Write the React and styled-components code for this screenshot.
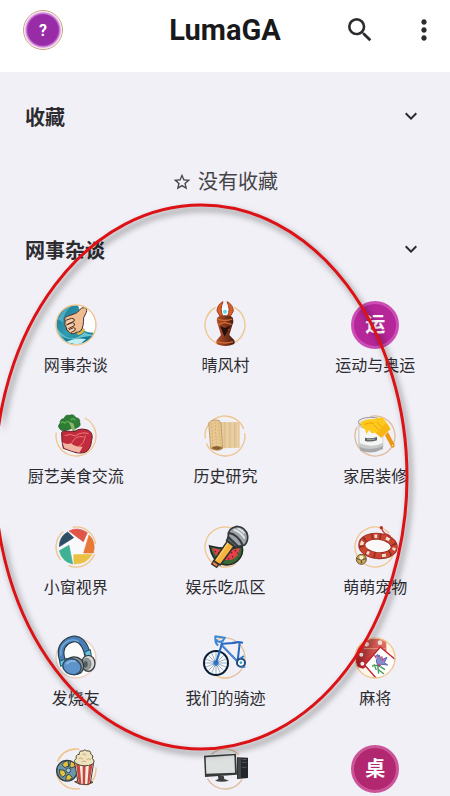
import { useState } from 'react';
import styled, { createGlobalStyle } from 'styled-components';
import { MdExpandMore, MdMoreVert, MdSearch, MdStarBorder } from 'react-icons/md';

const GlobalStyle = createGlobalStyle`
  :root {
    --color-bg: #f1f0f6;
    --color-surface: #fff;
    --color-text: #2c2c30;
    --color-ring: #efc58d;
    --color-mark: #dc1216;
  }

  * {
    box-sizing: border-box;
  }

  body {
    margin: 0;
    color: var(--color-text);
    background: var(--color-bg);
    font-family: Roboto, 'Noto Sans CJK SC', sans-serif;
  }

  button {
    padding: 0;
    border: none;
    background: none;
    color: inherit;
    font-family: inherit;
    cursor: pointer;
  }
`;

const Screen = styled.div`
  position: relative;
  display: flex;
  flex-direction: column;
  height: 100vh;
  overflow: hidden;
`;

const Header = styled.header`
  display: grid;
  grid-template-columns: 1fr auto 1fr;
  align-items: center;
  flex-shrink: 0;
  padding: 10px 10px 22px;
  background: var(--color-surface);
`;

const Avatar = styled.button`
  width: 40px;
  height: 40px;
  margin-left: 13px;
  border: 1px solid #c9a283;
  border-radius: 50%;
  background: radial-gradient(circle, #982ba6 15px, #b653c3 16px, #efd3f2 18px, #fff 19px);
  color: #fff;
  font-size: 16px;
  font-weight: 700;
`;

const Title = styled.h1`
  margin: 0;
  color: #19191b;
  font-size: 29px;
  line-height: 40px;
`;

const Actions = styled.div`
  display: flex;
  justify-content: flex-end;
  gap: 32px;
`;

const IconButton = styled.button`
  display: flex;
  font-size: 32px;
`;

const Main = styled.main`
  flex: 1;
  min-height: 0;
  padding-top: 21px;
  overflow-y: auto;
  scrollbar-width: none;
`;

const SectionTitle = styled.h2`
  margin: 0;
`;

const SectionToggle = styled.button`
  display: flex;
  align-items: center;
  justify-content: space-between;
  width: 100%;
  height: 46px;
  padding: 0 27px 0 25px;
  font-size: 20px;
  font-weight: 700;

  & svg {
    width: 24px;
    height: 24px;
    transform: ${({ $open }) => ($open ? 'none' : 'rotate(-90deg)')};
  }
`;

const Empty = styled.p`
  display: flex;
  align-items: center;
  justify-content: center;
  gap: 6px;
  margin: 0;
  padding: 31px 0 32px;
  color: #444448;
  font-size: 20px;
  line-height: 24px;
`;

const BoardGrid = styled.ul`
  display: grid;
  grid-template-columns: repeat(3, 1fr);
  row-gap: 34px;
  margin: 0;
  padding: 29px 0 29px 1px;
  list-style: none;
`;

const BoardLink = styled.a`
  display: flex;
  flex-direction: column;
  align-items: center;
  gap: 5px;
  color: inherit;
  font-size: 16px;
  line-height: 24px;
  text-decoration: none;
  white-space: nowrap;
`;

const BoardIcon = styled.svg`
  width: 48px;
  height: 48px;
  overflow: visible;
`;

const LetterIcon = styled.span`
  display: grid;
  place-items: center;
  width: 48px;
  height: 48px;
  border: 3px solid ${({ $border }) => $border};
  border-radius: 50%;
  background: ${({ $color }) => $color};
  color: #fff;
  font-size: 20px;
  font-weight: 700;
`;

const Mark = styled.svg`
  position: absolute;
  inset: 0;
  width: 100%;
  height: 100%;
  pointer-events: none;
  filter: drop-shadow(3px 4px 3px rgba(0, 0, 0, 0.5));
`;

const Ring = ({ dash, rotate = 0, color = 'var(--color-ring)' }) => (
  <circle
    cx="72"
    cy="72"
    r="60"
    fill="none"
    stroke={color}
    strokeWidth="4"
    pathLength="100"
    strokeDasharray={dash}
    transform={`rotate(${rotate} 72 72)`}
  />
);

const Thumb = () => (
  <BoardIcon viewBox="0 0 144 144">
    <defs>
      <clipPath id="thumb-clip">
        <circle cx="72" cy="71" r="59" />
      </clipPath>
      <linearGradient id="thumb-sea" x1="0" y1="0" x2="1" y2="1">
        <stop offset="0" stopColor="#176b88" />
        <stop offset="0.5" stopColor="#2f9db3" />
        <stop offset="1" stopColor="#0e6880" />
      </linearGradient>
    </defs>
    <g clipPath="url(#thumb-clip)">
      <rect width="144" height="144" fill="url(#thumb-sea)" />
      <path d="M76 8q26-2 44 18l20 40-2 28q-30 4-46-8l-2-40z" fill="#fff" />
      <path d="M10 72q18 34 42 40 26 2 46-18 12 8 34 8-20 12-42 10-30 20-62 2-14-16-18-42z" fill="#6cc3d0" />
      <path d="M14 90q24 30 54 24 24-8 54-10-24 30-70 28z" fill="#127b98" />
      <path d="M18 54q14-30 40-38-28 24-24 50z" fill="#4dacc0" />
      <path d="M40 124q30-16 62-10l-20 18z" fill="#c4edef" />
    </g>
    <path d="M40 60q-6-10 6-14l22-8q8-2 14-10 6-10 15-8 10 2 6 14l-8 16q0 12-2 24-4 20-20 20-14 10-22-2-10-4-8-12-8-10-3-20z" fill="#f0bd93" stroke="#4b3028" strokeWidth="3" />
    <path d="M41 58l18-6q10 0 8 8l-21 10M43 72l18-7q9 1 6 9l-18 9M51 86l14-6q8 1 4 8l-13 7" fill="#f6cfaa" stroke="#4b3028" strokeWidth="3" />
    <path d="M73 96q16-2 21-16l5 7q-8 14-20 15z" fill="#e8b53a" />
    <Ring />
  </BoardIcon>
);

const Totem = () => (
  <BoardIcon viewBox="0 0 144 144">
    <defs>
      <linearGradient id="totem-wood">
        <stop offset="0" stopColor="#b9532a" />
        <stop offset="0.4" stopColor="#8a3b20" />
        <stop offset="1" stopColor="#45190f" />
      </linearGradient>
    </defs>
    <Ring dash="84 16" rotate="-62" />
    <path d="M58 22l14-6 14 6-4 28H62z" fill="#f3ffff" />
    <circle cx="72" cy="32" r="6" fill="#65d8e4" />
    <path d="M66 2Q49 10 48 30l9 16h9Q55 26 66 2zM78 2q18 8 19 28l-9 16h-9Q90 26 78 2z" fill="#d95f28" stroke="#a5401f" strokeWidth="3" />
    <path d="M48 52q4-9 24-9t24 9q3 10-2 20l-9 30 15 16q3 8-2 12-24 10-50 0-5-5-1-12l13-16-9-30q-6-11-3-20z" fill="url(#totem-wood)" />
    <path d="M50 54q21 9 44 0M52 70l18-6 22 6M60 84l12 6 13-6M48 122q24 8 48 0" fill="none" stroke="#d46b31" strokeWidth="4" />
    <path d="M57 75l14 32 16-32-16 6z" fill="#270f0b" />
  </BoardIcon>
);

const Meat = () => (
  <BoardIcon viewBox="0 0 144 144">
    <Ring dash="70 30" rotate="-64" />
    <path d="M40 56q-14 2-18-7-6-8 2-15 0-14 12-14 3-13 17-10 13-5 18 7 14 1 12 14 5 11-6 15-7 7-14 2z" fill="#2d7d35" stroke="#1e5729" strokeWidth="2" />
    <path d="M49 28q10 20 14 33l12-1q-8-8-10-25" fill="#8fb66d" />
    <path d="M27 34q5-8 12 0 5-11 13-2M56 24q7-8 14 1" fill="none" stroke="#5aaa51" strokeWidth="4" />
    <path d="M29 66q-2-9 10-9 18 2 30 1 17-12 40-3 16 8 10 30-1 20-12 31-12 10-35 6L34 109Q29 92 29 66z" fill="#c12b3c" stroke="#66202b" strokeWidth="3" />
    <path d="M31 91q15 9 26 2 12 13 35 11l-10 18q-22-3-45-14z" fill="#f0b5a3" />
    <path d="M38 71q18-8 32 1 18-14 40-7M60 92q10-23 35-17M100 70q-2 24-22 35" fill="none" stroke="#f07a7b" strokeWidth="3" />
  </BoardIcon>
);

const Scroll = () => (
  <BoardIcon viewBox="0 0 144 144">
    <Ring dash="46 4 46 4" rotate="-8" />
    <path d="M56 30l60 1v76l-59 2z" fill="#e6c99b" />
    <path d="M71 31v77M86 31v77M101 31v77" stroke="#d6ba8c" strokeWidth="2" />
    <path d="M64 31v77M79 31v77M94 31v77M110 31v77" stroke="#ecd3a8" strokeWidth="3" />
    <path d="M23 32q11-11 31-7l6 8 5 76q-14 12-36 0z" fill="#e8c891" stroke="#ab834e" strokeWidth="2" />
    <path d="M31 33l5 74M42 30l5 78M53 32l5 71" stroke="#c59c62" strokeWidth="2" strokeDasharray="5 5" />
    <ellipse cx="48" cy="108" rx="17" ry="6" fill="#a37b40" />
    <path d="M37 108q10-6 19 0-8 6-15 1" fill="none" stroke="#64421e" strokeWidth="2" />
  </BoardIcon>
);

const Paint = () => (
  <BoardIcon viewBox="0 0 144 144">
    <Ring dash="86 14" rotate="-104" color="#dfbd9d" />
    <path d="M22 30v76q17 18 55 9l20-10V30z" fill="#c9cacb" />
    <path d="M25 45q34 16 70 0v48q-32 16-69 1z" fill="#f5f5f3" />
    <path d="M26 105q32 14 70-3v9q-34 18-68 5z" fill="#a7a8aa" />
    <ellipse cx="59" cy="30" rx="37" ry="14" fill="#e7e7e6" stroke="#999b9c" strokeWidth="3" />
    <path d="M28 32q14-13 42-10 16-8 26-4l20 26-26 30-18-12-10 2-8-10-8 12-4-16q-12 0-14-18z" fill="#ffc81c" />
    <path d="M40 37q16-6 28-3M68 38l20 20M78 30l20 22" fill="none" stroke="#e8a40c" strokeWidth="3" />
    <path d="M104 34l15 17-28 27-16-15z" fill="#f7b614" />
    <path d="M111 60l20 38q1 10-9 9l-20-37z" fill="#ee9611" />
    <circle cx="125" cy="100" r="2" fill="#fff" />
    <path d="M42 77q18 4 36-2v10q-18 6-36 2z" fill="#596064" />
    <path d="M48 83q12 1 24-2" stroke="#c9cdd0" strokeWidth="2" fill="none" />
  </BoardIcon>
);

const Shutter = () => (
  <BoardIcon viewBox="0 0 144 144">
    <Ring dash="25 8.33" rotate="140" />
    <circle cx="73" cy="71" r="54" fill="#fff" opacity="0.6" />
    <path d="M51 24Q77 10 106 29L94 56z" fill="#df5548" stroke="#df5548" strokeWidth="2" />
    <path d="M111 36q22 20 13 54H95z" fill="#e87835" stroke="#e87835" strokeWidth="2" />
    <path d="M65 95l55-1q-15 30-54 29z" fill="#eac145" stroke="#eac145" strokeWidth="2" />
    <path d="M22 83l29-16 11 56Q30 116 22 83z" fill="#3fb195" stroke="#3fb195" strokeWidth="2" />
    <path d="M22 71q0-30 25-44l18 17z" fill="#2d4f65" stroke="#2d4f65" strokeWidth="2" />
  </BoardIcon>
);

const Microphone = () => (
  <BoardIcon viewBox="0 0 144 144">
    <Ring dash="66 34" rotate="58" />
    <path d="M26 69q50 14 97 1 7 25-14 44-19 17-48 9-28-13-35-54z" fill="#3c6836" stroke="#222b27" strokeWidth="5" />
    <path d="M34 75q40 13 82 0-2 28-26 36-45 4-56-36z" fill="#e64249" />
    <path d="M42 83l2 5M53 87l1 5M91 87l2 4M102 81l2 4M94 99l2 4M109 88l1 4M82 105l2 4" stroke="#65262d" strokeWidth="4" />
    <path d="M38 114l44-63 20 15-44 60z" fill="#f7b43c" stroke="#333" strokeWidth="5" />
    <path d="M82 58l-36 53" stroke="#ffd06a" strokeWidth="4" />
    <path d="M38 114l15 11-6 8-15-10z" fill="#ee824f" stroke="#333" strokeWidth="4" />
    <path d="M82 41l-5 12 26 20 13-3z" fill="#4f5960" stroke="#2e3439" strokeWidth="5" />
    <path d="M82 41q-3-26 26-31 27 2 32 29 1 18-10 28l-18 3z" fill="#9da5aa" stroke="#343a40" strokeWidth="5" />
    <path d="M84 30q26 4 42 38" fill="none" stroke="#343a40" strokeWidth="6" />
    <path d="M98 20q20 5 33 27M110 16q12 5 20 15" fill="none" stroke="#e5e9eb" strokeWidth="5" />
  </BoardIcon>
);

const Collar = () => (
  <BoardIcon viewBox="0 0 144 144">
    <Ring dash="80 20" rotate="26" />
    <ellipse cx="81" cy="69" rx="49" ry="29" transform="rotate(6 81 69)" fill="#fbf8f8" stroke="#962d24" strokeWidth="21" />
    <ellipse cx="81" cy="69" rx="49" ry="29" transform="rotate(6 81 69)" fill="none" stroke="#cb4630" strokeWidth="17" strokeDasharray="19 5" />
    <ellipse cx="81" cy="69" rx="49" ry="29" transform="rotate(6 81 69)" fill="none" stroke="#f3dfcd" strokeWidth="10" strokeDasharray="8 27 12 39" />
    <path d="M92 13q0 11 12 20 18 5 16 18" fill="none" stroke="#c4352d" strokeWidth="4" />
    <circle cx="91" cy="14" r="5" fill="#b92f29" />
    <circle cx="31" cy="109" r="15" fill="#c9a657" stroke="#6b5637" strokeWidth="3" />
    <path d="M18 107q14 7 27 0M31 109v12" stroke="#4f402d" strokeWidth="3" fill="none" />
    <circle cx="31" cy="104" r="6" fill="#fff2cf" />
  </BoardIcon>
);

const Headphones = () => (
  <BoardIcon viewBox="0 0 144 144">
    <circle cx="72" cy="72" r="59" fill="#fff" opacity="0.7" />
    <Ring color="#ebcfbd" />
    <path d="M34 87Q17 44 43 24q32-22 52 8 11 17 13 43" fill="none" stroke="#273742" strokeWidth="20" />
    <path d="M34 87Q17 44 43 24q32-22 52 8 11 17 13 43" fill="none" stroke="#477eb5" strokeWidth="14" />
    <path d="M27 65Q22 37 46 22q19-9 34 1" fill="none" stroke="#78add7" strokeWidth="4" />
    <path d="M23 82l21-9 3 13-21 11zM98 54l17-7 3 18-16 5z" fill="#66c7dc" stroke="#285465" strokeWidth="3" />
    <ellipse cx="109" cy="88" rx="20" ry="24" fill="#d5d8d4" stroke="#394147" strokeWidth="4" />
    <ellipse cx="104" cy="90" rx="13" ry="17" fill="#929895" stroke="#60686a" strokeWidth="2" />
    <ellipse cx="101" cy="91" rx="6" ry="10" fill="#535d60" />
    <path d="M40 79q28-20 49-1 13 22-2 38-24 14-42-6-17-15-5-31z" fill="#8b9395" stroke="#303b43" strokeWidth="4" />
    <ellipse cx="60" cy="98" rx="28" ry="23" transform="rotate(20 60 98)" fill="#5e94ca" stroke="#2c4b67" strokeWidth="4" />
    <path d="M43 91q11-15 29-8" fill="none" stroke="#8ab8df" strokeWidth="5" />
  </BoardIcon>
);

const Bicycle = () => (
  <BoardIcon viewBox="0 0 144 144">
    <Ring dash="62 38" rotate="-117" color="#e2c2a5" />
    <Ring dash="13 87" rotate="75" />
    <circle cx="45" cy="87" r="36" fill="#f8fcff" stroke="#071d35" strokeWidth="6" />
    <g stroke="#74879b" strokeWidth="2">
      <path d="M45 54v66M12 87h66M22 64l46 46M68 64l-46 46M32 57l26 60M58 57L32 117M15 75l60 24M15 99l60-24" />
    </g>
    <circle cx="45" cy="87" r="8" fill="#3179cc" />
    <path d="M45 87L64 25M59 30l52 54M65 29l42-3M116 28l-6 52M92 27l20-3 14 2" fill="none" stroke="#2768c0" strokeWidth="6" />
    <path d="M43 5v11q9 12 22 5l6-10-17-3q-9 2-10-4M43 15q0 15 9 19" fill="none" stroke="#3c86d4" strokeWidth="6" />
    <path d="M62 32l48 51" stroke="#85baf0" strokeWidth="2" />
    <circle cx="120" cy="86" r="12" fill="#fff" stroke="#214979" strokeWidth="6" />
    <circle cx="120" cy="86" r="4" fill="#36a9cb" />
    <path d="M116 74l13-8M119 99h14" stroke="#3178c5" strokeWidth="5" />
  </BoardIcon>
);

const Mahjong = () => (
  <BoardIcon viewBox="0 0 144 144">
    <defs>
      <clipPath id="mahjong-clip">
        <circle cx="73" cy="72" r="60" />
      </clipPath>
      <linearGradient id="mahjong-dice" x1="1" y1="0" x2="0" y2="1">
        <stop offset="0" stopColor="#e0796a" />
        <stop offset="1" stopColor="#b31620" />
      </linearGradient>
    </defs>
    <circle cx="73" cy="72" r="60" fill="#fff5e9" />
    <g clipPath="url(#mahjong-clip)">
      <path d="M36 14h70v47l-70 43-22-7V44z" fill="url(#mahjong-dice)" />
      <path d="M39 44h66" stroke="#ed9b81" strokeWidth="3" />
      <circle cx="47" cy="31" r="7" fill="#f6dcd8" />
      <circle cx="87" cy="26" r="7" fill="#f6dcd8" />
      <circle cx="31" cy="62" r="6" fill="#fff" />
      <circle cx="34" cy="89" r="6" fill="#fff" />
      <path d="M41 93l47-54 49 41-20 53-42-1z" fill="#fff" stroke="#bd2530" strokeWidth="4" strokeLinejoin="round" />
      <path d="M72 68l8-7 5 9M76 77l9-14 6 15 17-8-8 16 10 7-18-2-8 8-7-13z" fill="#8a8ccc" stroke="#5c66b0" strokeWidth="3" />
      <path d="M63 96l17-2 3 25M80 105l19 15M69 91l7 17M88 98l14 9" fill="none" stroke="#419b57" strokeWidth="4" />
      <path d="M70 64l6 8M92 67l3 12M80 91l8 4" stroke="#d73d55" strokeWidth="4" />
    </g>
    <Ring />
  </BoardIcon>
);

const Popcorn = () => (
  <BoardIcon viewBox="0 0 144 144">
    <Ring dash="17 6 24 10 22 21" rotate="-5" />
    <Ring dash="17 83" rotate="207" />
    <circle cx="45" cy="77" r="31" fill="#6c97a8" stroke="#303d42" strokeWidth="4" />
    <path d="M30 59q6-11 18-12l2 17q-8-1-10 5zM56 48q13 4 15 16l-15 5-3-6zM22 74l15 2 5 12-10 9q-12-9-10-23zM43 92l9-4 9 10q-8 10-20 8z" fill="#e3c13f" stroke="#34454b" strokeWidth="3" />
    <circle cx="49" cy="76" r="7" fill="#a9c9d2" stroke="#344b56" strokeWidth="3" />
    <path d="M68 110q32-9 55 2-13 10-31 2l-8 4z" fill="#d9a75e" stroke="#513d2e" strokeWidth="3" />
    <path d="M68 53h57l-10 62q-19 9-37-2z" fill="#f2ecdf" stroke="#473c38" strokeWidth="3" />
    <path d="M72 56h11l5 60-8-3zM92 56h9l-2 63-7-1zM111 56h11l-10 60-6 2z" fill="#c84740" />
    <path d="M70 55q-7-9 3-15-3-11 9-12-2-12 11-10 5-7 12 0 13-2 11 9 11 5 5 13 10 8 2 17-26 12-53-2z" fill="#efe3bd" stroke="#52473b" strokeWidth="3" />
    <path d="M80 41q7-6 12 2M92 28q8-4 10 4M104 44q7-7 13 1M89 51q6-7 13 0" fill="none" stroke="#c5a974" strokeWidth="3" />
  </BoardIcon>
);

const Computer = () => (
  <BoardIcon viewBox="0 0 144 144">
    <Ring dash="24 76" rotate="-132" color="#dfbd9d" />
    <Ring dash="33 67" rotate="32" color="#dfbd9d" />
    <path d="M108 37l33 1v61l-33 3z" fill="#25272a" />
    <path d="M110 40l10-1v60l-10 2z" fill="#44484b" />
    <path d="M123 44l14-1M122 52h15M122 67h15" stroke="#6b6e70" strokeWidth="2" />
    <path d="M9 32l96-6 3 63-96 7z" fill="#35393a" />
    <path d="M14 37l86-6 2 52-86 3z" fill="#dce0df" />
    <path d="M51 93h17l2 9 14 5q-22 6-42 0l10-5z" fill="#3c3e40" />
  </BoardIcon>
);

const boards = [
  { name: '网事杂谈', icon: <Thumb /> },
  { name: '晴风村', icon: <Totem /> },
  {
    name: '运动与奥运',
    icon: (
      <LetterIcon $color="#b52699" $border="#cc4eb5">
        运
      </LetterIcon>
    ),
  },
  { name: '厨艺美食交流', icon: <Meat /> },
  { name: '历史研究', icon: <Scroll /> },
  { name: '家居装修', icon: <Paint /> },
  { name: '小窗视界', icon: <Shutter /> },
  { name: '娱乐吃瓜区', icon: <Microphone /> },
  { name: '萌萌宠物', icon: <Collar /> },
  { name: '发烧友', icon: <Headphones /> },
  { name: '我们的骑迹', icon: <Bicycle /> },
  { name: '麻将', icon: <Mahjong /> },
  { icon: <Popcorn /> },
  { icon: <Computer /> },
  {
    icon: (
      <LetterIcon $color="#b22870" $border="#cc5599">
        桌
      </LetterIcon>
    ),
  },
];

const Section = ({ title, children }) => {
  const [open, setOpen] = useState(true);

  return (
    <section>
      <SectionTitle>
        <SectionToggle $open={open} aria-expanded={open} onClick={() => setOpen(!open)}>
          {title}
          <MdExpandMore />
        </SectionToggle>
      </SectionTitle>
      {open && children}
    </section>
  );
};

export default function App() {
  return (
    <>
      <GlobalStyle />
      <Screen>
        <Header>
          <Avatar>?</Avatar>
          <Title>LumaGA</Title>
          <Actions>
            <IconButton aria-label="搜索">
              <MdSearch />
            </IconButton>
            <IconButton aria-label="更多">
              <MdMoreVert />
            </IconButton>
          </Actions>
        </Header>
        <Main>
          <Section title="收藏">
            <Empty>
              <MdStarBorder />
              没有收藏
            </Empty>
          </Section>
          <Section title="网事杂谈">
            <BoardGrid>
              {boards.map(({ name, icon }, index) => (
                <li key={index}>
                  <BoardLink href="#">
                    {icon}
                    {name}
                  </BoardLink>
                </li>
              ))}
            </BoardGrid>
          </Section>
        </Main>
        <Mark viewBox="0 0 450 796" aria-hidden="true">
          <ellipse cx="201" cy="477" rx="206" ry="272" fill="none" stroke="var(--color-mark)" strokeWidth="3" />
        </Mark>
      </Screen>
    </>
  );
}
